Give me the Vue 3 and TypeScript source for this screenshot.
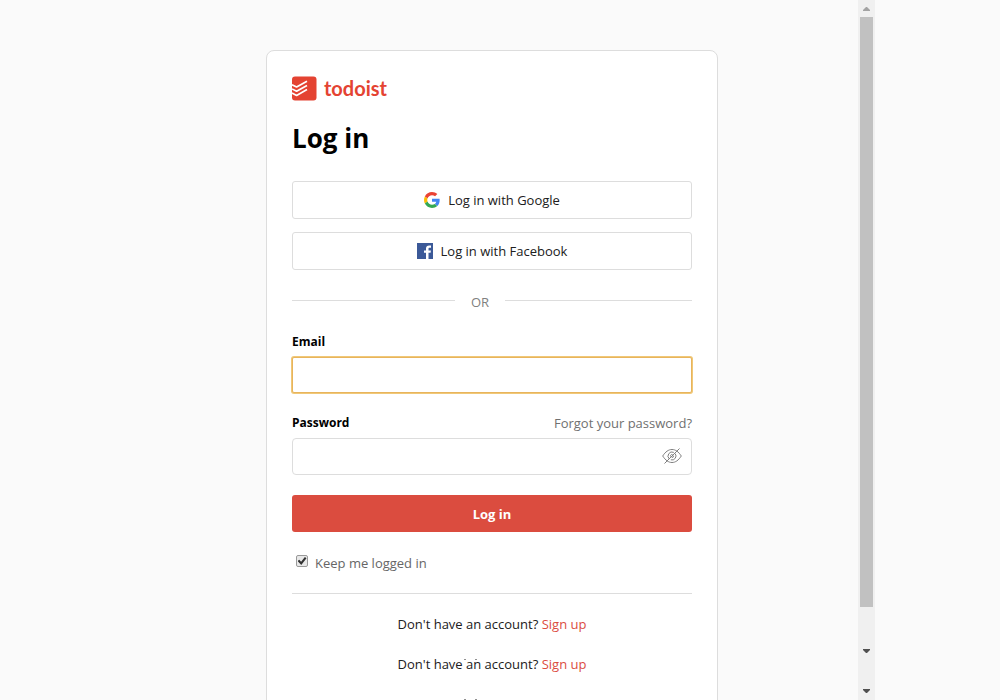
<script setup lang="ts">
import { ref } from 'vue'

const email = ref('')
const password = ref('')
const keepLoggedIn = ref(true)
const signUpRows = [1, 2]
</script>

<template>
  <div class="page">
    <main class="card">
      <a class="logo" href="#" aria-label="todoist">
        <svg class="logo-mark" viewBox="0 0 25 25" aria-hidden="true">
          <rect x="0" y="0.5" width="24.500" height="24" rx="3" fill="#e44332" />
          <g fill="none" stroke="#fff" stroke-width="1.700" stroke-linejoin="round">
            <path d="M0 8.700 4.600 11 15 5.200" />
            <path d="M0 12.900 4.600 15.200 15 9.400" />
            <path d="M0 17.100 4.600 19.400 15 13.600" />
          </g>
        </svg>
        <span class="logo-name">todoist</span>
      </a>

      <h1>Log in</h1>

      <div class="providers">
        <button type="button" class="provider">
          <svg viewBox="0 0 48 48" aria-hidden="true">
            <path fill="#ea4335" d="M24 9.5c3.54 0 6.71 1.22 9.21 3.6l6.85-6.85C35.9 2.38 30.47 0 24 0 14.62 0 6.51 5.38 2.56 13.22l7.98 6.19C12.43 13.72 17.74 9.5 24 9.5z" />
            <path fill="#4285f4" d="M46.98 24.55c0-1.57-.15-3.09-.38-4.55H24v9.02h12.94c-.58 2.96-2.26 5.48-4.78 7.18l7.73 6c4.51-4.18 7.09-10.36 7.09-17.65z" />
            <path fill="#fbbc05" d="M10.53 28.59c-.48-1.45-.76-2.99-.76-4.59s.27-3.14.76-4.59l-7.98-6.19C.92 16.46 0 20.12 0 24c0 3.88.92 7.54 2.56 10.78l7.97-6.19z" />
            <path fill="#34a853" d="M24 48c6.48 0 11.93-2.13 15.89-5.81l-7.73-6c-2.15 1.45-4.92 2.3-8.16 2.3-6.26 0-11.57-4.22-13.47-9.91l-7.98 6.19C6.51 42.62 14.62 48 24 48z" />
          </svg>
          <span>Log in with Google</span>
        </button>
        <button type="button" class="provider">
          <svg viewBox="0 0 16 16" aria-hidden="true">
            <rect width="16" height="16" fill="#3b5998" />
            <path fill="#fff" d="M9 16V9.800H7V7.400h2V5.600c0-2.100 1.300-3.200 3.100-3.200.9 0 1.600.1 1.900.1v2.200h-1.300c-1 0-1.200.5-1.200 1.200v1.500h2.400l-.3 2.400h-2.100V16z" />
          </svg>
          <span>Log in with Facebook</span>
        </button>
      </div>

      <div class="divider"><span>OR</span></div>

      <form @submit.prevent>
        <div class="label-row">
          <label for="email">Email</label>
        </div>
        <input id="email" v-model="email" class="field focused" type="email" />

        <div class="label-row">
          <label for="password">Password</label>
          <a href="#">Forgot your password?</a>
        </div>
        <div class="password">
          <input id="password" v-model="password" class="field" type="password" />
          <button type="button" class="reveal" aria-label="Show password">
            <svg viewBox="0 0 20 18" fill="none" stroke="#808080" aria-hidden="true">
              <path d="M.7 9C3.500 4.700 6.500 2.500 10 2.500S16.500 4.700 19.300 9C16.500 13.300 13.500 15.500 10 15.500S3.500 13.300.7 9z" />
              <path d="M7.400 12A4 4 0 0 1 11.800 5.400M13.200 6.600A4 4 0 0 1 8.800 12.800" />
              <path d="M8.500 9.500A1.600 1.600 0 0 1 10.500 7.500M11.500 8.700A1.600 1.600 0 0 1 9.800 10.500" />
              <path d="M2.500 16.500 17.500 1.500" />
            </svg>
          </button>
        </div>

        <button type="submit" class="submit">Log in</button>

        <label class="keep">
          <input v-model="keepLoggedIn" type="checkbox" />
          <span>Keep me logged in</span>
        </label>
      </form>

      <footer>
        <p v-for="row in signUpRows" :key="row">
          Don't have an account? <a href="#">Sign up</a>
          <span class="ticks" aria-hidden="true"></span>
        </p>
      </footer>
    </main>

    <div class="scrollbar" aria-hidden="true">
      <svg class="arrow" viewBox="0 0 7 4"><path fill="#a3a3a3" d="M3 0h1l3 3v1H0V3z" /></svg>
      <div class="thumb"></div>
      <svg class="arrow down" viewBox="0 0 7 4"><path fill="#505050" d="M0 0h7v1L4 4H3L0 1z" /></svg>
      <svg class="arrow down" viewBox="0 0 7 4"><path fill="#505050" d="M0 0h7v1L4 4H3L0 1z" /></svg>
    </div>
  </div>
</template>

<style>
body {
  background: #fafafa;
}
</style>

<style scoped>
* {
  box-sizing: border-box;
}

.page {
  position: relative;
  height: 100vh;
  overflow: hidden;
  padding: 50px 16px 0 0;
  background: #fafafa;
  color: #202020;
  font-family: "Segoe UI", "Open Sans", "Noto Sans", sans-serif;
  font-size: 13px;
  line-height: 20px;
}

.card {
  max-width: 452px;
  margin: 0 auto;
  padding: 25px 25px 40px;
  border: 1px solid #ddd;
  border-radius: 8px;
  background: #fff;
}

a {
  text-decoration: none;
}

button,
input {
  font: inherit;
}

.logo {
  display: flex;
  align-items: flex-start;
  gap: 7px;
  height: 25px;
  color: #e44332;
}

.logo-mark {
  width: 25px;
  height: 25px;
}

.logo-name {
  font-family: Lato, sans-serif;
  font-size: 20px;
  font-weight: 700;
  line-height: 24px;
}

h1 {
  margin: 19px 0 25px;
  color: #000;
  font-size: 26px;
  font-weight: 700;
  line-height: 36px;
}

.providers {
  display: flex;
  flex-direction: column;
  gap: 13px;
}

.provider {
  display: flex;
  align-items: center;
  justify-content: center;
  gap: 8px;
  height: 38px;
  border: 1px solid #ddd;
  border-radius: 3px;
  background: #fff;
  color: #202020;
}

.provider svg {
  width: 16px;
  height: 16px;
}

.divider {
  display: flex;
  margin-top: 22px;
  color: #808080;
}

.divider::before,
.divider::after {
  content: "";
  height: 1px;
  margin-top: 8px;
  background: #ddd;
}

.divider::before {
  flex: 41;
}

.divider::after {
  flex: 47;
}

.divider span {
  padding: 0 16px;
}

.label-row {
  display: flex;
  justify-content: space-between;
  margin: 20px 0 5px;
}

.label-row label {
  color: #000;
  font-size: 12px;
  font-weight: 700;
}

.label-row a {
  color: #707070;
}

.field {
  display: block;
  width: 100%;
  height: 36px;
  padding: 0 10px;
  border: 1px solid #ddd;
  border-radius: 4px;
  outline: none;
  background: #fff;
}

.focused {
  border-color: #e8b45c;
  border-radius: 2px;
  box-shadow: 0 0 0 1px #f0c878;
}

.password {
  position: relative;
}

.password .field {
  height: 37px;
}

.reveal {
  position: absolute;
  top: 9px;
  right: 10px;
  width: 20px;
  height: 18px;
  padding: 0;
  border: 0;
  background: none;
}

.reveal svg {
  display: block;
}

.submit {
  display: block;
  width: 100%;
  height: 37px;
  margin-top: 20px;
  border: 0;
  border-radius: 3px;
  background: #db4c3f;
  color: #fff;
  font-weight: 700;
}

.keep {
  display: flex;
  align-items: flex-start;
  gap: 7px;
  margin-top: 21px;
  padding: 0 4px 20px;
  border-bottom: 1px solid #ddd;
  color: #666;
}

.keep input {
  display: grid;
  place-items: center;
  width: 12px;
  height: 12px;
  margin: 2px 0 0;
  appearance: none;
  border: 1px solid #999;
  border-radius: 2px;
  background: #e8e8e8;
}

.keep input:checked::before {
  content: "";
  width: 9px;
  height: 8px;
  background: #333;
  clip-path: polygon(0 50%, 20% 35%, 40% 60%, 82% 0, 100% 16%, 42% 100%);
}

footer {
  padding-top: 20px;
  text-align: center;
}

footer p {
  position: relative;
  margin: 0 0 20px;
}

footer a {
  color: #db4c3f;
}

/* Two short marks under each row, at the top of the one that follows. */
.ticks {
  position: absolute;
  top: 45px;
  left: 43%;
  width: 13px;
  height: 1px;
  border: solid #909090;
  border-width: 0 2px;
}

.scrollbar {
  position: absolute;
  top: 0;
  right: 125px;
  bottom: 0;
  display: flex;
  flex-direction: column;
  align-items: center;
  width: 17px;
  padding: 7px 0;
  background: #f0f0f0;
}

.arrow {
  width: 7px;
  height: 4px;
}

.thumb {
  flex: 1;
  width: 13px;
  margin: 6px 0 42px;
  background: #c1c1c1;
}

.down + .down {
  margin-top: 36px;
}
</style>
